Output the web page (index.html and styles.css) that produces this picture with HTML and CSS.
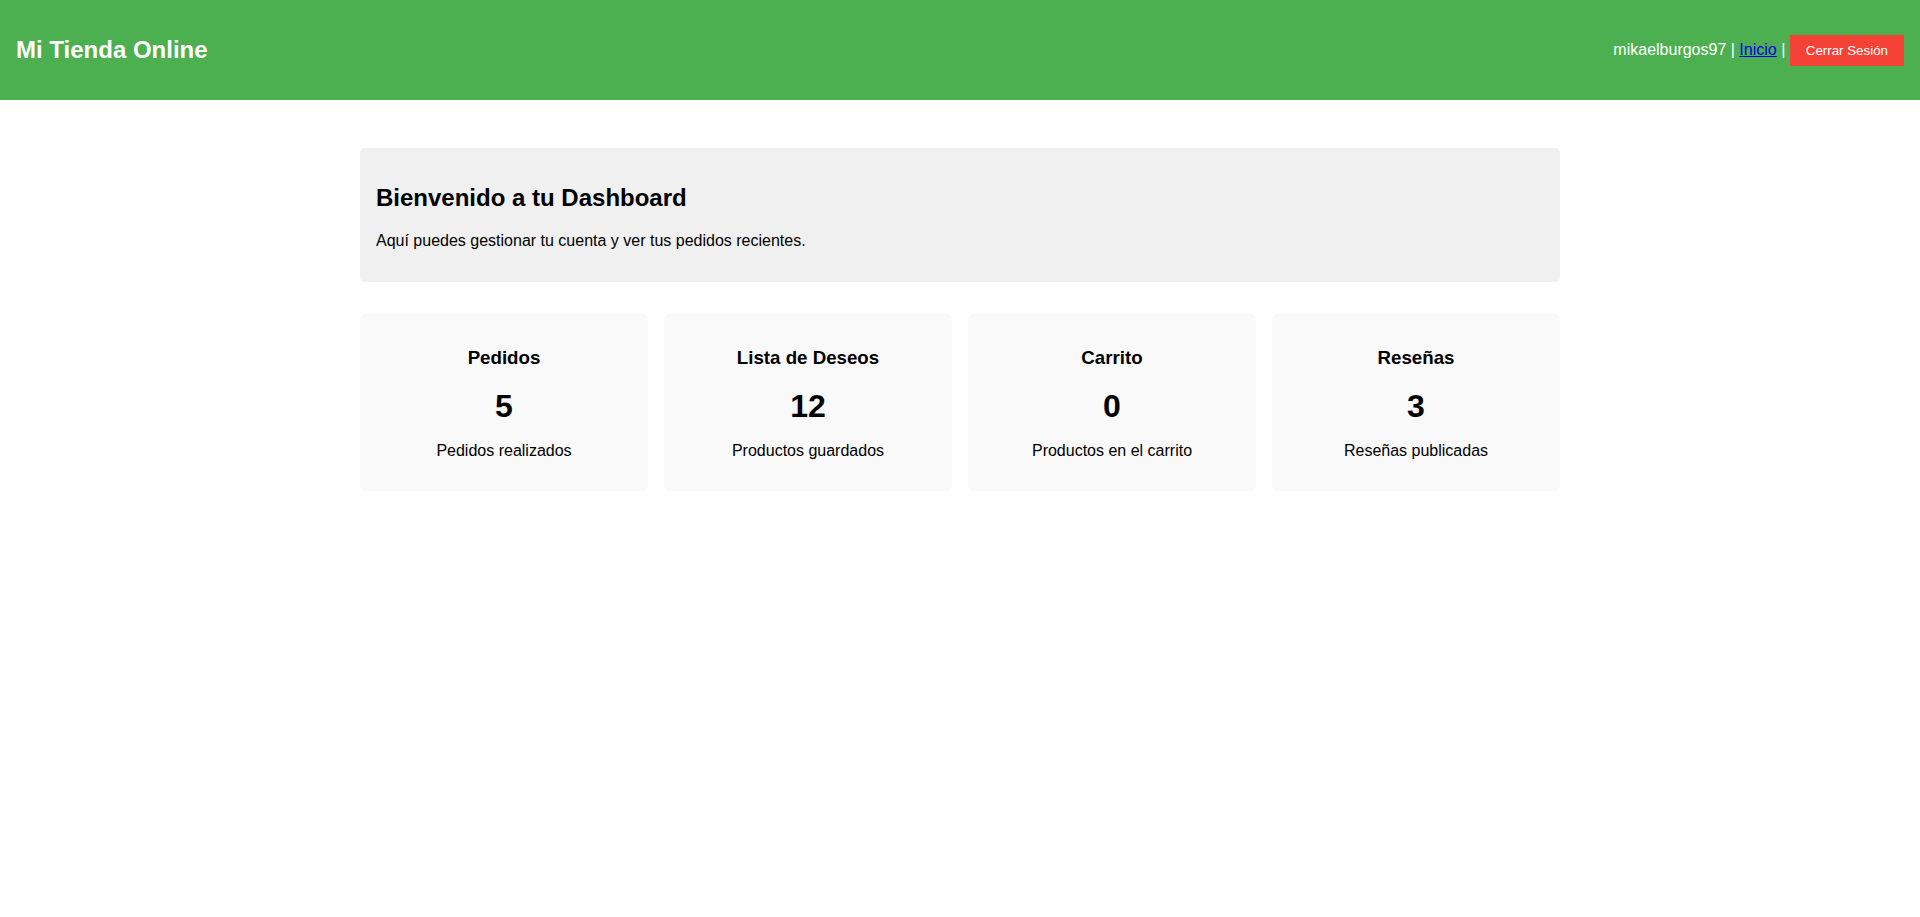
FILE: index.html
```html
<!DOCTYPE html>
<html lang="es">
<head>
<meta charset="utf-8">
<title>Mi Tienda Online - Dashboard</title>
<link rel="stylesheet" href="styles.css">
</head>
<body>
<header class="topbar">
  <h1 class="logo">Mi Tienda Online</h1>
  <div class="user-nav">mikaelburgos97 | <a href="#" class="nav-link">Inicio</a> | <button class="logout">Cerrar Sesión</button></div>
</header>
<main class="container">
  <section class="welcome">
    <h2 class="welcome-title">Bienvenido a tu Dashboard</h2>
    <p class="welcome-text">Aquí puedes gestionar tu cuenta y ver tus pedidos recientes.</p>
  </section>
  <section class="stats">
    <div class="card">
      <h3 class="card-title">Pedidos</h3>
      <p class="card-number">5</p>
      <p class="card-label">Pedidos realizados</p>
    </div>
    <div class="card">
      <h3 class="card-title">Lista de Deseos</h3>
      <p class="card-number">12</p>
      <p class="card-label">Productos guardados</p>
    </div>
    <div class="card">
      <h3 class="card-title">Carrito</h3>
      <p class="card-number">0</p>
      <p class="card-label">Productos en el carrito</p>
    </div>
    <div class="card">
      <h3 class="card-title">Reseñas</h3>
      <p class="card-number">3</p>
      <p class="card-label">Reseñas publicadas</p>
    </div>
  </section>
</main>
</body>
</html>
```
FILE: styles.css
```css
html, body {
  margin: 0;
  padding: 0;
  background: #ffffff;
  font-family: "Liberation Sans", Arial, sans-serif;
  font-size: 16px;
  color: #000;
}

.topbar {
  height: 100px;
  box-sizing: border-box;
  background: #4CAF50;
  color: #fff;
  display: flex;
  align-items: center;
  justify-content: space-between;
  padding: 0 16px;
}

.logo {
  margin: 0;
  font-size: 24px;
  font-weight: bold;
  line-height: 1.15;
}

.user-nav {
  font-size: 16px;
  color: #fff;
}

.nav-link {
  color: #0000EE;
  text-decoration: underline;
}

.logout {
  font-family: "Liberation Sans", Arial, sans-serif;
  font-size: 13.333px;
  background: #f44336;
  color: #fff;
  border: none;
  padding: 8px 16px;
  cursor: pointer;
}

.container {
  width: 1200px;
  margin: 48px auto 0;
}

.welcome {
  background: #f0f0f0;
  border-radius: 5px;
  padding: 16px;
}

.welcome-title {
  font-size: 24px;
  margin: 19.92px 0;
}

.welcome-text {
  margin: 16px 0;
}

.stats {
  display: grid;
  grid-template-columns: repeat(4, 1fr);
  gap: 16px;
  margin-top: 32px;
}

.card {
  background: #f9f9f9;
  border-radius: 5px;
  padding: 16px;
  text-align: center;
}

.card-title {
  font-size: 18.72px;
  margin: 17.5px 0 18.72px;
}

.card-number {
  font-size: 32px;
  font-weight: bold;
  margin: 11px 0 10px;
}

.card-label {
  margin: 16.5px 0 15.7px;
}
```
